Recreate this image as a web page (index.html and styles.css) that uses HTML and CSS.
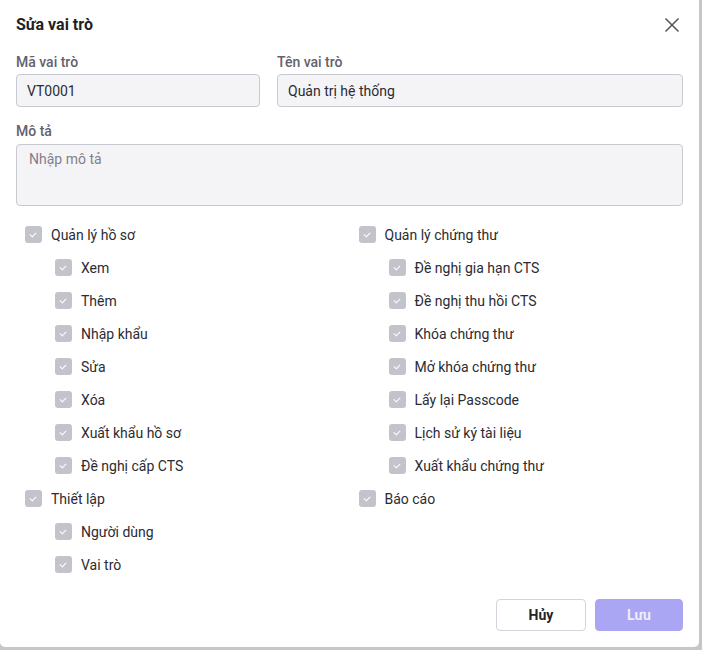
FILE: index.html
```html
<!DOCTYPE html>
<html lang="vi">
<head>
<meta charset="utf-8">
<title>Sửa vai trò</title>
<link rel="stylesheet" href="styles.css">
</head>
<body>
<div class="modal">
  <div class="header">
    <h1 class="title">Sửa vai trò</h1>
    <button class="close" aria-label="Đóng">
      <svg width="16" height="16" viewBox="0 0 16 16"><path d="M1.5 1.5 L14.5 14.5 M14.5 1.5 L1.5 14.5" stroke="#555" stroke-width="1.5" fill="none"/></svg>
    </button>
  </div>
  <div class="row2">
    <div class="field">
      <label class="label">Mã vai trò</label>
      <input class="input" value="VT0001">
    </div>
    <div class="field">
      <label class="label">Tên vai trò</label>
      <input class="input" value="Quản trị hệ thống">
    </div>
  </div>
  <div class="field field-desc">
    <label class="label">Mô tả</label>
    <textarea class="textarea" placeholder="Nhập mô tả"></textarea>
  </div>
  <div class="perms">
    <ul class="col">
      <li class="item"><span class="cb"></span>Quản lý hồ sơ</li>
      <li class="item sub"><span class="cb"></span>Xem</li>
      <li class="item sub"><span class="cb"></span>Thêm</li>
      <li class="item sub"><span class="cb"></span>Nhập khẩu</li>
      <li class="item sub"><span class="cb"></span>Sửa</li>
      <li class="item sub"><span class="cb"></span>Xóa</li>
      <li class="item sub"><span class="cb"></span>Xuất khẩu hồ sơ</li>
      <li class="item sub"><span class="cb"></span>Đề nghị cấp CTS</li>
      <li class="item"><span class="cb"></span>Thiết lập</li>
      <li class="item sub"><span class="cb"></span>Người dùng</li>
      <li class="item sub"><span class="cb"></span>Vai trò</li>
    </ul>
    <ul class="col">
      <li class="item"><span class="cb"></span>Quản lý chứng thư</li>
      <li class="item sub"><span class="cb"></span>Đề nghị gia hạn CTS</li>
      <li class="item sub"><span class="cb"></span>Đề nghị thu hồi CTS</li>
      <li class="item sub"><span class="cb"></span>Khóa chứng thư</li>
      <li class="item sub"><span class="cb"></span>Mở khóa chứng thư</li>
      <li class="item sub"><span class="cb"></span>Lấy lại Passcode</li>
      <li class="item sub"><span class="cb"></span>Lịch sử ký tài liệu</li>
      <li class="item sub"><span class="cb"></span>Xuất khẩu chứng thư</li>
      <li class="item"><span class="cb"></span>Báo cáo</li>
    </ul>
  </div>
  <div class="footer">
    <button class="btn btn-cancel">Hủy</button>
    <button class="btn btn-save">Lưu</button>
  </div>
</div>
</body>
</html>
```
FILE: styles.css
```css
html, body {
  margin: 0;
  padding: 0;
  background: #c6c6c6;
  height: 650px;
  overflow: hidden;
}
body {
  font-family: Roboto, "Noto Sans", sans-serif;
  font-size: 14px;
  color: #2b2b33;
}
.modal {
  width: 699px;
  height: 647px;
  box-sizing: border-box;
  background: #fff;
  border-radius: 0 0 5px 5px;
  padding: 0 16px 16px 16px;
  display: flex;
  flex-direction: column;
}
.header {
  height: 52px;
  display: flex;
  align-items: center;
  justify-content: space-between;
}
.title {
  margin: 0;
  font-size: 16px;
  font-weight: 700;
  color: #1f1f24;
  line-height: 20px;
  position: relative;
  top: -1px;
}
.close {
  border: 0;
  background: none;
  padding: 0;
  width: 16px;
  height: 16px;
  margin-right: 3px;
  position: relative;
  top: -1px;
}
.row2 {
  display: grid;
  grid-template-columns: 244px 1fr;
  gap: 17px;
}
.field {
  display: flex;
  flex-direction: column;
}
.label {
  font-size: 14px;
  font-weight: 500;
  color: #62626d;
  line-height: 20px;
  margin-bottom: 2px;
}
.input, .textarea {
  font-family: inherit;
  font-size: 14px;
  color: #2b2b33;
  background: #f4f4f7;
  border: 1px solid #c9c9d1;
  border-radius: 4px;
  box-sizing: border-box;
  outline: none;
}
.input {
  height: 33px;
  padding: 0 10px;
}
.field-desc {
  margin-top: 14px;
}
.field-desc .label {
  margin-bottom: 3px;
}
.textarea {
  height: 62px;
  padding: 6px 12px;
  resize: none;
  line-height: 16px;
}
.textarea::placeholder {
  color: #80808b;
}
.perms {
  display: grid;
  grid-template-columns: 1fr 1fr;
  margin-top: 12px;
}
.col {
  list-style: none;
  margin: 0;
  padding: 0 9px;
}
.item {
  height: 33px;
  display: flex;
  align-items: center;
  gap: 9px;
  line-height: 20px;
}
.item.sub {
  padding-left: 30px;
}
.cb {
  width: 17px;
  height: 17px;
  border-radius: 3px;
  background: #c3c3cb;
  flex: none;
  position: relative;
}
.cb::after {
  content: "";
  position: absolute;
  left: 6px;
  top: 5px;
  width: 3px;
  height: 5px;
  border: solid #fff;
  border-width: 0 1.5px 1.5px 0;
  transform: rotate(45deg);
}
.footer {
  margin-top: auto;
  display: flex;
  justify-content: flex-end;
  gap: 9px;
}
.btn {
  height: 32px;
  border-radius: 4px;
  font-family: inherit;
  font-size: 14px;
  font-weight: 700;
  padding: 0;
}
.btn-cancel {
  width: 90px;
  background: #fff;
  border: 1px solid #d3d3db;
  color: #23232a;
}
.btn-save {
  width: 88px;
  background: #aba6f3;
  border: 1px solid #aba6f3;
  color: #eeeefe;
}
```
